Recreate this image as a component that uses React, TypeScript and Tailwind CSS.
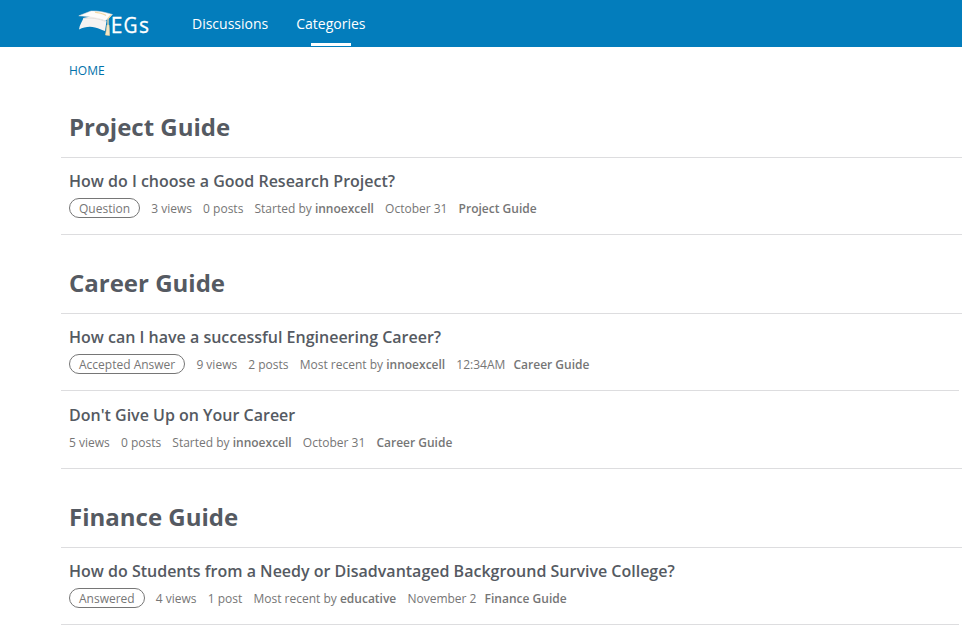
import { clsx } from "clsx";

type Discussion = {
  title: string;
  tag?: string;
  views: string;
  posts: string;
  action: string;
  user: string;
  date: string;
  category: string;
  tight?: boolean;
  more?: boolean;
};

const groups: { name: string; items: Discussion[] }[] = [
  {
    name: "Project Guide",
    items: [
      { title: "How do I choose a Good Research Project?", tag: "Question", views: "3 views", posts: "0 posts", action: "Started by", user: "innoexcell", date: "October 31", category: "Project Guide" },
    ],
  },
  {
    name: "Career Guide",
    items: [
      { title: "How can I have a successful Engineering Career?", tag: "Accepted Answer", views: "9 views", posts: "2 posts", action: "Most recent by", user: "innoexcell", date: "12:34AM", category: "Career Guide", tight: true, more: true },
      { title: "Don't Give Up on Your Career", views: "5 views", posts: "0 posts", action: "Started by", user: "innoexcell", date: "October 31", category: "Career Guide" },
    ],
  },
  {
    name: "Finance Guide",
    items: [
      { title: "How do Students from a Needy or Disadvantaged Background Survive College?", tag: "Answered", views: "4 views", posts: "1 post", action: "Most recent by", user: "educative", date: "November 2", category: "Finance Guide", tight: true, more: true },
    ],
  },
];

function Logo() {
  return (
    <svg width="74" height="30" viewBox="0 0 74 30" className="shrink-0" aria-label="EGs">
      <path d="M5.500 9 C4 13 1.500 16 1 20.500 C6 18 12 17 17 18.500 C21 19.500 24 21 27 22 L28.500 12 L15 7 Z" fill="#f5f3f2" />
      <path d="M5 9.500 C13 8.500 21 9.500 27.500 12.500" fill="none" stroke="#dedad8" strokeWidth="0.8" />
      <path d="M0.800 6.800 L13 2 C20 1.500 28 3.500 34.500 5.500 L27.500 11.800 C19 8.500 9 7.500 0.800 6.800 Z" fill="#fdfcfb" stroke="#e6dfdb" strokeWidth="0.5" />
      <path d="M17 3.200 C21 4 26 4.500 28 6.500 M33 6 L30 9.500 L30 17" fill="none" stroke="#f3d9a6" strokeWidth="1.300" />
      <path d="M29 16 L28.500 20 L27.500 26 L31.500 26.500 L31.300 20 L31 16 Z" fill="#f8e6c2" stroke="#f1d49c" strokeWidth="0.6" />
      <text y="23.600" fill="#fff" stroke="#fff" strokeWidth="0.3" fontFamily="Open Sans, sans-serif" fontSize="21">
        <tspan x="32.800">E</tspan>
        <tspan x="45.500" textLength="14" lengthAdjust="spacingAndGlyphs">G</tspan>
        <tspan x="61">s</tspan>
      </text>
    </svg>
  );
}

function DiscussionRow({ item, first }: { item: Discussion; first: boolean }) {
  return (
    <li className={clsx(item.more && "mr-[3px]", "border-b border-[#dddddf] pl-2", first ? "h-[77px] pt-[11px]" : "h-[78px] pt-3")}>
      <h3 className="text-base leading-6 font-semibold text-[#555a62]">{item.title}</h3>
      <div className="mt-[5px] flex h-5 items-center gap-[11.15px] text-xs leading-5 whitespace-nowrap text-[#767676]">
        {item.tag && (
          <span className="flex h-5 items-center rounded-full border border-[#767676] px-[9px] pt-0.5 leading-4">{item.tag}</span>
        )}
        <span className="pt-0.5">{item.views}</span>
        <span className="pt-0.5">{item.posts}</span>
        <span className="pt-0.5">
          {item.action} <b className="font-semibold">{item.user}</b>
        </span>
        <span className="pt-0.5">{item.date}</span>
        <b className={clsx("pt-0.5 font-semibold", item.tight && "-ml-[3px]")}>{item.category}</b>
      </div>
    </li>
  );
}

export default function App() {
  return (
    <div className="h-[629px] overflow-hidden bg-white font-['Open_Sans',sans-serif] antialiased">
      <header className="flex h-[47px] items-start bg-[#037dbc] pt-[9px] pl-[78px] text-sm text-white">
        <Logo />
        <nav className="ml-10 flex gap-7">
          <a className="h-[38px] leading-[30px]">Discussions</a>
          <a className="flex h-[37px] flex-col items-center justify-between leading-[30px]">
            Categories
            <span className="h-[3px] w-10 bg-white" />
          </a>
        </nav>
      </header>
      <main className="pl-[61px]">
        <div className="h-[32px] pt-[15px] pl-2 text-xs leading-[18px] text-[#0271aa]">HOME</div>
        {groups.map((group) => (
          <section key={group.name}>
            <h2 className="h-[78px] pt-8 pl-2 text-2xl leading-[32px] font-bold text-[#555a62]">{group.name}</h2>
            <ul className="border-t border-[#dddddf]">
              {group.items.map((item, i) => (
                <DiscussionRow key={item.title} item={item} first={i === 0} />
              ))}
            </ul>
          </section>
        ))}
      </main>
    </div>
  );
}
